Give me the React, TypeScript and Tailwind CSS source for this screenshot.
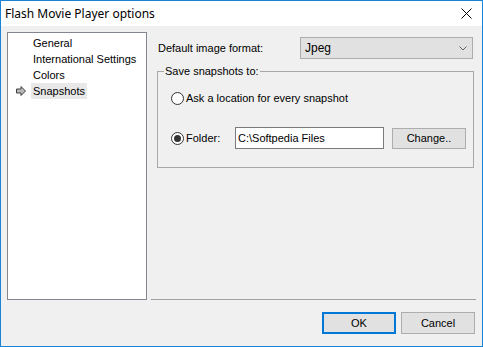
import React from "react";

const listItems = ["General", "International Settings", "Colors", "Snapshots"];

const Radio: React.FC<{ checked?: boolean }> = ({ checked }) => (
  <span className="w-[13px] h-[13px] rounded-full border border-[#333333] bg-white flex items-center justify-center shrink-0">
    {checked && <span className="w-[7px] h-[7px] rounded-full bg-[#333333]" />}
  </span>
);

const App: React.FC = () => {
  return (
    <div
      className="w-[483px] h-[347px] border border-[#1883d7] bg-[#f0f0f0] flex flex-col text-[11px] text-black overflow-hidden"
      style={{ fontFamily: '"Liberation Sans", Arial, sans-serif' }}
    >
      {/* title bar */}
      <div className="h-[25px] bg-white flex items-center justify-between pl-[4px] pr-[10px] shrink-0">
        <span className="text-[12px]" style={{ fontFamily: '"Noto Sans", "Open Sans", sans-serif' }}>
          Flash Movie Player options
        </span>
        <svg width="11" height="11" viewBox="0 0 11 11">
          <path d="M0.5 0.5 L10.5 10.5 M10.5 0.5 L0.5 10.5" stroke="#000" strokeWidth="1" />
        </svg>
      </div>

      <div className="flex pt-[6px] pl-[6px]">
        {/* left list */}
        <div className="w-[140px] h-[268px] border border-[#828790] bg-white pt-[2px]">
          {listItems.map((item) => (
            <div key={item} className="flex items-center h-[16px]">
              <div className="w-[23px] flex items-center pl-[8px]">
                {item === "Snapshots" && (
                  <svg width="10" height="10" viewBox="0 0 10 10">
                    <polygon points="0.5,3 5,3 5,0.5 9.5,5 5,9.5 5,7 0.5,7" fill="#b8b8b8" stroke="#404040" strokeWidth="1" />
                  </svg>
                )}
              </div>
              <span className={`px-[2px] h-[16px] leading-[16px] ${item === "Snapshots" ? "bg-[#e8e8e8]" : ""}`}>
                {item}
              </span>
            </div>
          ))}
        </div>

        {/* right column */}
        <div className="ml-[4px] w-[325px] h-[268px] flex flex-col">
          <div className="pl-[6px] pr-[2px]">
            <div className="flex items-center mt-[5px] h-[22px]">
              <span className="ml-[1px] w-[142px]">Default image format:</span>
              <div className="w-[173px] h-[22px] border border-[#adadad] bg-[#e1e1e1] flex items-center justify-between pl-[4px] pr-[5px]">
                <span className="text-[12px]">Jpeg</span>
                <svg width="8" height="5" viewBox="0 0 8 5">
                  <path d="M0.5 0.5 L4 4 L7.5 0.5" stroke="#606060" fill="none" strokeWidth="1" />
                </svg>
              </div>
            </div>

            <fieldset className="mt-[6px] border border-[#a8a8a8] h-[103px] px-0 pb-0">
              <legend className="ml-[6px] px-[1px] leading-[13px]">Save snapshots to:</legend>
              <div className="flex items-center gap-[2px] ml-[13px] mt-[12px] h-[16px]">
                <Radio />
                <span>Ask a location for every snapshot</span>
              </div>
              <div className="flex items-center ml-[13px] mt-[21px] h-[22px]">
                <Radio checked />
                <span className="ml-[2px] w-[49px]">Folder:</span>
                <div className="w-[149px] h-[22px] border border-[#7a7a7a] bg-white flex items-center pl-[2px]">
                  C:\Softpedia Files
                </div>
                <div className="ml-[8px] w-[74px] h-[21px] border border-[#adadad] bg-[#e1e1e1] flex items-center justify-center">
                  Change..
                </div>
              </div>
            </fieldset>
          </div>
          <div className="mt-auto h-px bg-[#a0a0a0]" />
        </div>
      </div>

      {/* buttons */}
      <div className="flex justify-end gap-[5px] pr-[7px] mt-[12px]">
        <div className="w-[74px] h-[22px] border-2 border-[#0078d7] bg-[#e1e1e1] flex items-center justify-center">
          OK
        </div>
        <div className="w-[74px] h-[22px] border border-[#adadad] bg-[#e1e1e1] flex items-center justify-center">
          Cancel
        </div>
      </div>
    </div>
  );
};

export default App;
